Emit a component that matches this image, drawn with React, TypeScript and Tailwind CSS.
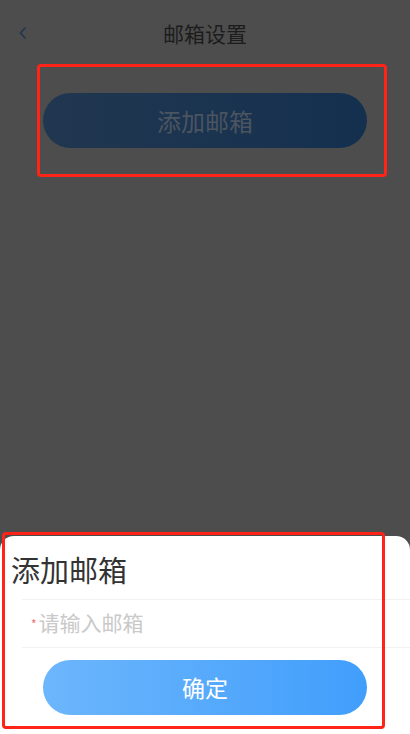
import React from "react";

export default function App() {
  const font = { fontFamily: '"Noto Sans CJK SC", "Noto Sans", sans-serif' };
  return (
    <div
      className="relative w-[410px] h-[734px] overflow-hidden bg-[#4d4d4d]"
      style={font}
    >
      {/* header */}
      <div className="relative flex h-[66px] items-center justify-center">
        <div className="absolute left-[17px] top-[25px]">
          <svg width="12" height="16" viewBox="0 0 12 16" fill="none">
            <path d="M8 3 L3.5 8 L8 13" stroke="#1f3550" strokeWidth="1.6" strokeLinecap="round" strokeLinejoin="round" />
          </svg>
        </div>
        <span className="text-[21px] leading-none text-[#1c1c1c]">邮箱设置</span>
      </div>

      {/* dimmed add button */}
      <div className="mt-[27px] flex justify-center">
        <div className="flex h-[55px] w-[324px] items-center justify-center rounded-full bg-gradient-to-r from-[#213750] to-[#14304f]">
          <span className="text-[24px] text-[#4b5560]">添加邮箱</span>
        </div>
      </div>

      {/* bottom sheet */}
      <div className="absolute bottom-0 left-0 flex h-[198px] w-[410px] flex-col rounded-t-[14px] bg-white">
        <div className="pl-[11px] pt-[16px] pb-[12px] text-[29px] leading-[35px] text-[#333333]">添加邮箱</div>
        <div className="ml-[22px] flex h-[49px] items-center border-y border-[#f2f2f2]">
          <span className="ml-[9px] mr-[2px] text-[12px] leading-none text-[#f56c6c]">*</span>
          <span className="-mt-[2px] text-[21px] text-[#c9c9c9]">请输入邮箱</span>
        </div>
        <div className="mt-[12px] flex justify-center">
          <div className="flex h-[55px] w-[324px] items-center justify-center rounded-full bg-gradient-to-r from-[#6cb6fc] to-[#409efb]">
            <span className="text-[23px] text-white">确定</span>
          </div>
        </div>
      </div>

      {/* annotation boxes */}
      <div className="pointer-events-none absolute left-[37px] top-[64px] h-[113px] w-[350px] rounded-[4px] border-[3px] border-[#ff2318]" />
      <div className="pointer-events-none absolute left-[2px] top-[532px] h-[197px] w-[383px] rounded-[4px] border-[3px] border-[#ff2318]" />
    </div>
  );
}
